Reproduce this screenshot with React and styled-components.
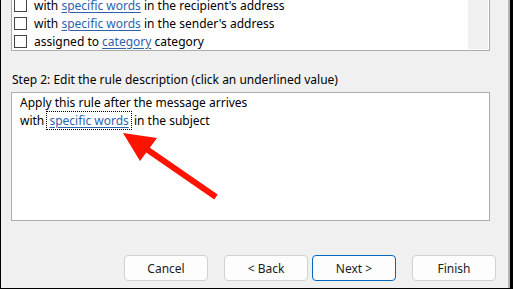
import React from "react";
import styled, { createGlobalStyle } from "styled-components";

const GlobalStyle = createGlobalStyle`
  html, body {
    margin: 0;
    padding: 0;
    background: #f0f0f0;
  }
  body {
    font-family: "Noto Sans", "Open Sans", sans-serif;
    font-size: 12px;
    color: #000;
  }
`;

const Frame = styled.div`
  position: relative;
  width: 513px;
  height: 289px;
  box-sizing: border-box;
  display: flex;
  border-left: 1px solid #000;
  border-bottom: 1px solid #000;
  border-right: 3px solid #000;
  overflow: hidden;
`;

const Body = styled.div`
  flex: 1;
  display: flex;
  flex-direction: column;
  padding-left: 10px;
  border-right: 2px solid #b4b4b4;
`;

const ConditionList = styled.div`
  width: 479px;
  height: 51px;
  box-sizing: border-box;
  display: flex;
  border: 1px solid #acacac;
  border-top: none;
  box-shadow: inset -1px -1px 0 #fff;
  background: #fff;
`;

const Rows = styled.div`
  flex: 1;
  display: flex;
  flex-direction: column;
  justify-content: flex-end;
  overflow: hidden;
  padding-left: 2px;
`;

const Track = styled.div`
  width: 20px;
  margin: 0 1px 1px 0;
  background: #f0f0f0;
`;

const Row = styled.div`
  height: 18px;
  flex: none;
  display: flex;
  align-items: center;
  gap: 7px;
  white-space: nowrap;
`;

const Check = styled.span`
  width: 13px;
  height: 13px;
  box-sizing: border-box;
  border: 1px solid #444;
  background: #fff;
  flex: none;
`;

const Link = styled.span`
  color: #2f62ad;
  text-decoration: underline;
  text-underline-offset: 2px;
  padding: ${(p) => (p.$focused ? "0 2px" : "0")};
  outline: ${(p) => (p.$focused ? "1px dotted #000" : "none")};
  outline-offset: 0;
`;

const StepLabel = styled.div`
  margin-top: 21px;
  line-height: 16px;
  padding-left: 1px;
`;

const Description = styled.div`
  margin-top: 4px;
  width: 479px;
  height: 129px;
  box-sizing: border-box;
  border: 1px solid #acacac;
  background: #fff;
  padding: 1px 8px;
  line-height: 18px;
`;

const Buttons = styled.div`
  margin-top: 34px;
  display: flex;
  justify-content: flex-end;
  padding-right: 12px;
`;

const Button = styled.button`
  width: 84px;
  height: 26px;
  box-sizing: border-box;
  margin-left: ${(p) => p.$gap}px;
  background: #fdfdfd;
  border: 1px solid ${(p) => (p.$primary ? "#0067c0" : "#d0d0d0")};
  border-radius: 4px;
  font-family: inherit;
  font-size: 12px;
  color: #1b1b1b;
  padding: 0;
`;

const Arrow = styled.svg`
  position: absolute;
  left: 0;
  top: 0;
  pointer-events: none;
`;

export default function App() {
  return (
    <>
      <GlobalStyle />
      <Frame>
        <Body>
          <ConditionList>
            <Rows>
              <Row>
                <Check />
                <span>
                  with <Link>specific words</Link> in the recipient's address
                </span>
              </Row>
              <Row>
                <Check />
                <span>
                  with <Link>specific words</Link> in the sender's address
                </span>
              </Row>
              <Row>
                <Check />
                <span>
                  assigned to <Link>category</Link> category
                </span>
              </Row>
            </Rows>
            <Track />
          </ConditionList>
          <StepLabel>
            Step 2: Edit the rule description (click an underlined value)
          </StepLabel>
          <Description>
            <div>Apply this rule after the message arrives</div>
            <div>
              with <Link $focused>specific words</Link> in the subject
            </div>
          </Description>
          <Buttons>
            <Button $gap={0}>Cancel</Button>
            <Button $gap={16}>&lt; Back</Button>
            <Button $gap={4} $primary>
              Next &gt;
            </Button>
            <Button $gap={16}>Finish</Button>
          </Buttons>
        </Body>
        <Arrow width="513" height="289" viewBox="-1 0 513 289">
          <line
            x1="214"
            y1="197"
            x2="143"
            y2="148"
            stroke="#ff1200"
            strokeWidth="6"
          />
          <polygon points="121,133 155,138 138,161" fill="#ff1200" />
        </Arrow>
      </Frame>
    </>
  );
}
